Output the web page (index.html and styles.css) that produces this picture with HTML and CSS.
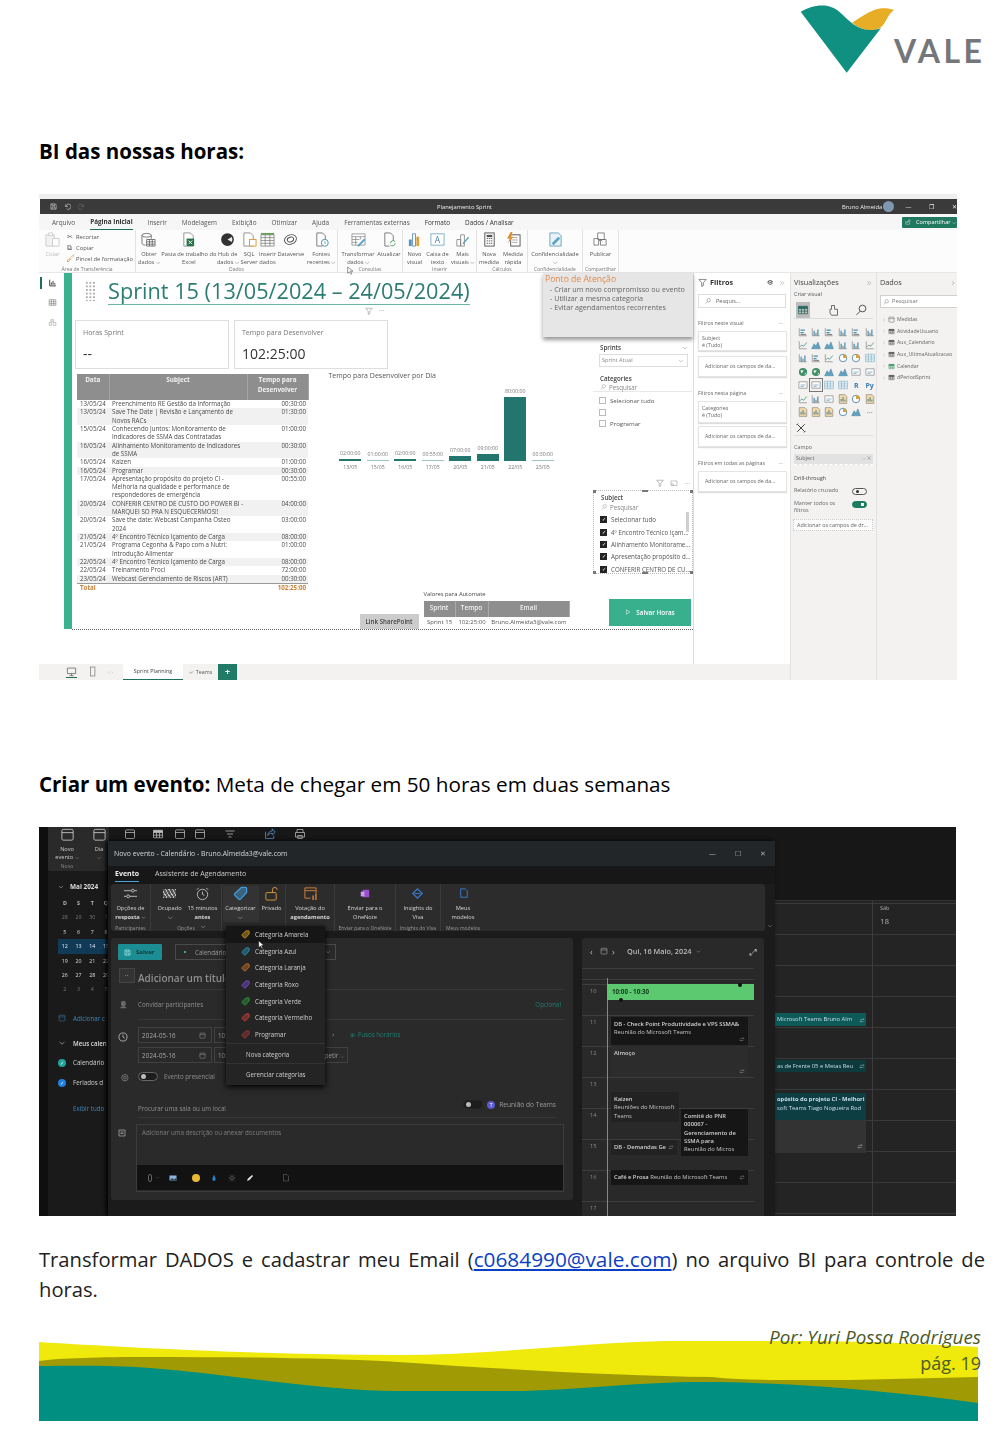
FILE: index.html
```html
<!DOCTYPE html>
<html lang="pt-BR">
<head>
<meta charset="utf-8">
<title>BI das nossas horas</title>
<link rel="stylesheet" href="styles.css">
</head>
<body>
<svg class="defs" xmlns="http://www.w3.org/2000/svg">
  <symbol id="s-db" viewBox="0 0 16 16"><g fill="none" stroke="#555" stroke-width=".8"><ellipse cx="6" cy="3.5" rx="5" ry="2"/><path d="M1 3.500V12c0 1 2 2 4 2M11 3.500V7"/><path d="M6 8h9v7H6zM6 10.500h9M6 13h9M9 8v7M12 8v7" fill="#fff"/></g></symbol>
  <symbol id="s-xl" viewBox="0 0 16 16"><path d="M3 1h7l3 3v11H3z" fill="#fff" stroke="#777" stroke-width=".8"/><rect x="6" y="7" width="8" height="8" fill="#217346"/><path d="M8 9l4 4M12 9l-4 4" stroke="#fff"/></symbol>
  <symbol id="s-hub" viewBox="0 0 16 16"><circle cx="8" cy="8" r="6" fill="#eee" stroke="#333" stroke-width="1.600"/><path d="M2 8a6 6 0 0 1 11-3L8 8l5 3a6 6 0 0 1-11-3z" fill="#333"/></symbol>
  <symbol id="s-doc" viewBox="0 0 16 16"><path d="M2 1h7l3 3v11H2z" fill="#fff" stroke="#777" stroke-width=".8"/><rect x="8" y="8" width="7" height="7" fill="#fff" stroke="#d79b3c"/></symbol>
  <symbol id="s-tbl" viewBox="0 0 16 16"><path d="M1 3h14v12H1zM1 6h14M1 9h14M1 12h14M5.500 3v12M10.500 3v12" fill="#fff" stroke="#666" stroke-width=".7"/><path d="M1 1h14v2H1z" fill="#6c9d5b"/></symbol>
  <symbol id="s-dv" viewBox="0 0 16 16"><g fill="none" stroke="#555"><ellipse cx="8" cy="8" rx="6.500" ry="5" transform="rotate(-20 8 8)"/><ellipse cx="8" cy="8" rx="3.500" ry="2.500" transform="rotate(-20 8 8)"/></g></symbol>
  <symbol id="s-rec" viewBox="0 0 16 16"><path d="M3 1h6l3 3v6" fill="none" stroke="#777"/><path d="M3 1v14h6" fill="none" stroke="#777"/><circle cx="11.500" cy="11.500" r="3.700" fill="#fff" stroke="#4b8fb0"/><path d="M11.500 9.500v2l1.500 1" fill="none" stroke="#4b8fb0" stroke-width=".7"/></symbol>
  <symbol id="s-tr" viewBox="0 0 16 16"><path d="M1 2h14v12H1zM1 5h14M1 8h8M1 11h6M5 5v9M10 5v3" fill="#fff" stroke="#777" stroke-width=".7"/><path d="M7 14l7-7 1.500 1.500-7 7H7z" fill="#58a4c4"/></symbol>
  <symbol id="s-ref" viewBox="0 0 16 16"><path d="M3 1h6l3 3v5M3 1v14h5" fill="none" stroke="#777"/><path d="M9 12a3 3 0 0 1 5-2M14 12a3 3 0 0 1-5 2" fill="none" stroke="#4a9a5a"/></symbol>
  <symbol id="s-bars" viewBox="0 0 16 16"><rect x="2" y="8" width="3" height="7" fill="#5b8fb5"/><rect x="6" y="2" width="3" height="13" fill="#fff" stroke="#3f7fa8" stroke-width=".8"/><rect x="10" y="5" width="3" height="10" fill="#d9a23c"/></symbol>
  <symbol id="s-txt" viewBox="0 0 16 16"><rect x="1" y="2" width="14" height="12" fill="#fff" stroke="#4b8fb0" stroke-width=".7"/><text x="8" y="12" font-size="9" text-anchor="middle" fill="#3f7fa8" font-family="Open Sans">A</text></symbol>
  <symbol id="s-more" viewBox="0 0 16 16"><path d="M2 8h4v7H2zM6 3h4v12H6z" fill="#fff" stroke="#777" stroke-width=".8"/><path d="M8 12l6-7 1 1-6 7z" fill="#58a4c4"/></symbol>
  <symbol id="s-calc" viewBox="0 0 16 16"><rect x="3" y="1" width="10" height="14" fill="#fff" stroke="#555"/><rect x="5" y="3" width="6" height="2.500" fill="#555"/><path d="M5 7h1.500M7.300 7h1.500M9.500 7h1.500M5 9.500h1.500M7.300 9.500h1.500M9.500 9.500h1.500M5 12h1.500M7.300 12h1.500M9.500 12h1.500" stroke="#555"/></symbol>
  <symbol id="s-quick" viewBox="0 0 16 16"><rect x="5" y="3" width="10" height="12" fill="#fff" stroke="#555"/><path d="M7 6h6M7 8.500h6M7 11h6" stroke="#555" stroke-dasharray="1 1"/><path d="M5 0L1 7h3l-2 5 6-7H5l2-5z" fill="#d9902c"/></symbol>
  <symbol id="s-sens" viewBox="0 0 16 16"><path d="M2 1h9l3 3v11H2z" fill="#e8f2f8" stroke="#4b8fb0" stroke-width=".8"/><path d="M4 12l7-7 2 2-7 7z" fill="#58a4c4"/></symbol>
  <symbol id="s-pub" viewBox="0 0 16 16"><path d="M5 1h7v7H5zM1 7h5v7H1zM8 8h6v6H8" fill="#fff" stroke="#666" stroke-width=".8"/><path d="M8 14V8l-2 2M8 8l2 2" fill="none" stroke="#666" stroke-width=".8"/></symbol>
  <symbol id="s-paste" viewBox="0 0 16 16"><path d="M1 3h9v12H1z" fill="#f2f2f2" stroke="#ccc"/><path d="M4 1h4v3H4z" fill="#fff" stroke="#ccc"/><path d="M8 7h7v8H8z" fill="#fff" stroke="#ccc"/></symbol>
  <symbol id="s-filter" viewBox="0 0 16 16"><path d="M1.500 2.500h13L9.500 8.500v5L6.500 15V8.500z" fill="none" stroke="currentColor" stroke-width="1.100"/></symbol>
  <symbol id="s-search" viewBox="0 0 16 16"><circle cx="10" cy="6" r="4.500" fill="none" stroke="currentColor" stroke-width="1.200"/><path d="M7 9.500L2 14.500" stroke="currentColor" stroke-width="1.200"/></symbol>
  <symbol id="s-chev" viewBox="0 0 16 16"><path d="M3 5.500l5 5 5-5" fill="none" stroke="currentColor" stroke-width="1.300"/></symbol>
  <symbol id="s-tri" viewBox="0 0 16 16"><path d="M5 3l6 5-6 5" fill="none" stroke="currentColor" stroke-width="1.200"/></symbol>
  <symbol id="s-dbl" viewBox="0 0 16 16"><path d="M3 3l5 5-5 5M8 3l5 5-5 5" fill="none" stroke="currentColor" stroke-width="1.100"/></symbol>
  <symbol id="s-tg" viewBox="0 0 16 16"><path d="M9 1.500h4.500a1 1 0 0 1 1 1V7L8 14a1.500 1.500 0 0 1-2 0L2 10a1.500 1.500 0 0 1 0-2z" fill="currentColor" fill-opacity=".45" stroke="currentColor" stroke-width="1.400"/></symbol>
  <symbol id="s-v1" viewBox="0 0 16 16"><path d="M2 2v12h12" fill="none" stroke="#777"/><path d="M4 4h7v2H4zM4 8h5v2H4z" fill="#4b8fb0"/><path d="M4 11h9v2H4z" fill="#8a8a8a"/></symbol>
  <symbol id="s-v2" viewBox="0 0 16 16"><path d="M2 2v12h12" fill="none" stroke="#777"/><path d="M4 6h2v8H4zM10 4h2v10h-2z" fill="#4b8fb0"/><path d="M7 9h2v5H7z" fill="#8a8a8a"/></symbol>
  <symbol id="s-v3" viewBox="0 0 16 16"><path d="M2 2v12h12" fill="none" stroke="#777"/><path d="M3 11l3-3 3 2 5-6" fill="none" stroke="#3f8e8a" stroke-width="1.200"/></symbol>
  <symbol id="s-v4" viewBox="0 0 16 16"><path d="M1 14l4-8 3 4 3-7 4 11z" fill="#5fa3c4" stroke="#3b6f88" stroke-width=".7"/></symbol>
  <symbol id="s-v5" viewBox="0 0 16 16"><circle cx="8" cy="8" r="6" fill="#fff" stroke="#3f7fa8" stroke-width="1.300"/><path d="M8 8V2a6 6 0 0 1 6 6z" fill="#d9a23c"/></symbol>
  <symbol id="s-v6" viewBox="0 0 16 16"><circle cx="8" cy="8" r="6.500" fill="#3f8f66"/><path d="M4 5h5l-1 3-3 2zM11 9l2 1-2 3z" fill="#e9e9e9"/></symbol>
  <symbol id="s-v7" viewBox="0 0 16 16"><rect x="1.500" y="3" width="13" height="10" fill="#fff" stroke="#777"/><path d="M4 8h8M4 10.500h5" stroke="#4b8fb0"/></symbol>
  <symbol id="s-v8" viewBox="0 0 16 16"><path d="M1 2h14v12H1zM1 5h14M1 8h14M1 11h14M5.500 2v12M10 2v12" fill="#fff" stroke="#4b8fb0" stroke-width=".7"/></symbol>
  <symbol id="s-v9" viewBox="0 0 16 16"><path d="M2 1h9l3 3v11H2z" fill="#f2d9a8" stroke="#666" stroke-width=".8"/><path d="M5 12V8M8 12V5M11 12V9" stroke="#2f6f8c" stroke-width="1.400"/></symbol>
  <symbol id="s-tbi" viewBox="0 0 16 16"><path d="M2 3h12v10H2zM2 6h12M2 9.500h12M6 6v7M10 6v7" fill="none" stroke="currentColor" stroke-width="1"/><path d="M2 3h12v3H2z" fill="currentColor"/></symbol>
  <symbol id="s-cal" viewBox="0 0 16 16"><rect x="2" y="2.500" width="12" height="11.500" rx="1.500" fill="none" stroke="currentColor"/><path d="M2 6h12" stroke="currentColor"/></symbol>
  <symbol id="s-rpt" viewBox="0 0 16 16"><path d="M3 9a4 4 0 0 1 4-3h6M13 6l-2-2M13 6l-2 2M13 10a4 4 0 0 1-4 2H3M3 12l2-2M3 12l2 2" fill="none" stroke="currentColor" stroke-width="1.100"/></symbol>
</svg>

<header class="doc-head">
  <svg class="logo" viewBox="0 0 227 90" width="227" height="90" role="img" aria-label="Vale">
    <path d="M72 22.700C83 16 90 10 100 8.500c5-.7 10 0 14 1.500C107 15 106 24 100 28c-9 5-20 1-28-5.300z" fill="#e8ad26"/>
    <path d="M20.700 11.700C32 5 48 2 59 11.500 65 17 69 21 73 24c8 6 19 8 28 4L66.700 72.700z" fill="#0f9080"/>
    <text x="114" y="63" class="logo-word" textLength="88">VALE</text>
  </svg>
</header>

<h2 class="doc-h">BI das nossas horas:</h2>

<section class="pbi">
  <div class="pbi-strip"></div>
  <div class="pbi-title">
    <div class="pt-left">
      <svg class="ic7" viewBox="0 0 16 16"><path d="M2 2h10l2 2v10H2zM5 2v4h6V2M5 14V9h6v5" fill="none" stroke="#ddd" stroke-width="1.300"/></svg>
      <svg class="ic7" viewBox="0 0 16 16"><path d="M4 3v5h5M4 8a6 6 0 1 1 2 5" fill="none" stroke="#ddd" stroke-width="1.300"/></svg>
      <svg class="ic7" viewBox="0 0 16 16"><path d="M12 3v5H7M12 8a6 6 0 1 0-2 5" fill="none" stroke="#777" stroke-width="1.300"/></svg>
    </div>
    <span class="pt-name">Planejamento Sprint</span>
    <span class="pt-user">Bruno Almeida</span>
    <span class="pt-avatar"></span>
    <span class="pt-ctl">—</span><span class="pt-ctl">❐</span><span class="pt-ctl">✕</span>
  </div>
  <nav class="pbi-tabs">
    <span>Arquivo</span><span class="on">Página Inicial</span><span>Inserir</span><span>Modelagem</span><span>Exibição</span><span>Otimizar</span><span>Ajuda</span><span>Ferramentas externas</span><span class="ctx">Formato</span><span class="ctx">Dados / Analisar</span>
    <span class="share"><svg class="ic6" viewBox="0 0 16 16"><path d="M2 6v8h10v-4M5 10c0-4 3-6 6-6V1l4 4.500L11 9V7c-3 0-5 1-6 3z" fill="none" stroke="#fff"/></svg>Compartilhar ⌵</span>
  </nav>
  <div class="ribbon">
    <div class="rg rg-clip">
      <div class="rg-items clip">
        <div class="rb pale"><svg class="ic16"><use href="#s-paste"/></svg>Colar</div>
        <ul class="clip-list">
          <li><span class="cl-g">✂</span>Recortar</li>
          <li><span class="cl-g">⧉</span>Copiar</li>
          <li><span class="cl-g orange">🖌</span>Pincel de formatação</li>
        </ul>
      </div>
      <div class="rg-lab">Área de Transferência</div>
    </div>
    <div class="rg rg-dados">
      <div class="rg-items">
        <div class="rb w26"><svg class="ic16"><use href="#s-db"/></svg>Obter<br>dados ⌵</div>
        <div class="rb w54"><svg class="ic16"><use href="#s-xl"/></svg>Pasta de trabalho do<br>Excel</div>
        <div class="rb w24"><svg class="ic16"><use href="#s-hub"/></svg>Hub de<br>dados ⌵</div>
        <div class="rb w19"><svg class="ic16"><use href="#s-doc"/></svg>SQL<br>Server</div>
        <div class="rb w18"><svg class="ic16"><use href="#s-tbl"/></svg>Inserir<br>dados</div>
        <div class="rb w29"><svg class="ic16"><use href="#s-dv"/></svg>Dataverse</div>
        <div class="rb w32"><svg class="ic16"><use href="#s-rec"/></svg>Fontes<br>recentes ⌵</div>
      </div>
      <div class="rg-lab">Dados</div>
    </div>
    <div class="rg rg-cons">
      <div class="rg-items">
        <div class="rb w36"><svg class="ic16"><use href="#s-tr"/></svg>Transformar<br>dados ⌵</div>
        <div class="rb w26"><svg class="ic16"><use href="#s-ref"/></svg>Atualizar</div>
      </div>
      <div class="rg-lab">Consultas</div>
      <svg class="pbi-cursor" viewBox="0 0 10 12"><path d="M1 1v9l2.500-2 2 3.500 1.500-1L5 7h3.500z" fill="#fff" stroke="#444" stroke-width=".8"/></svg>
    </div>
    <div class="rg rg-ins">
      <div class="rg-items">
        <div class="rb w22"><svg class="ic16"><use href="#s-bars"/></svg>Novo<br>visual</div>
        <div class="rb w22"><svg class="ic16"><use href="#s-txt"/></svg>Caixa de<br>texto</div>
        <div class="rb w28"><svg class="ic16"><use href="#s-more"/></svg>Mais<br>visuais ⌵</div>
      </div>
      <div class="rg-lab">Inserir</div>
    </div>
    <div class="rg rg-calc">
      <div class="rg-items">
        <div class="rb w24"><svg class="ic16"><use href="#s-calc"/></svg>Nova<br>medida</div>
        <div class="rb w24"><svg class="ic16"><use href="#s-quick"/></svg>Medida<br>rápida</div>
      </div>
      <div class="rg-lab">Cálculos</div>
    </div>
    <div class="rg rg-conf">
      <div class="rg-items">
        <div class="rb w54"><svg class="ic16"><use href="#s-sens"/></svg>Confidencialidade<br>⌵</div>
      </div>
      <div class="rg-lab">Confidencialidade</div>
    </div>
    <div class="rg rg-pub">
      <div class="rg-items">
        <div class="rb w36"><svg class="ic16"><use href="#s-pub"/></svg>Publicar</div>
      </div>
      <div class="rg-lab">Compartilhar</div>
    </div>
  </div>

  <div class="pbi-body">
    <div class="pbi-work">
      <div class="pbi-row">
        <aside class="rail">
          <svg class="rail-ic" viewBox="0 0 16 16"><path d="M3 3v11h11M6 12V8M9 12V5M12 12V9" fill="none" stroke="#333" stroke-width="1.600"/></svg>
          <svg class="rail-ic" viewBox="0 0 16 16"><path d="M2 3h12v10H2zM2 6.500h12M2 10h12M6 3v10M10 3v10" fill="none" stroke="#777"/></svg>
          <svg class="rail-ic" viewBox="0 0 16 16"><path d="M5 3h5v3H5zM2 8h4v5H2zM9 8h5v5H9z" fill="none" stroke="#999"/></svg>
        </aside>
        <main class="report">
          <div class="report-page">
            <div class="rp-left">
              <div class="rp-title-row">
                <span class="drag-dots"></span>
                <h3 class="sprint-title">Sprint 15 (13/05/2024 – 24/05/2024)</h3>
              </div>
              <div class="title-tools"><svg class="ic8 gr"><use href="#s-filter"/></svg><span>···</span></div>
              <div class="cards">
                <div class="card"><div class="card-lab">Horas Sprint</div><div class="card-val">--</div></div>
                <div class="card"><div class="card-lab">Tempo para Desenvolver</div><div class="card-val">102:25:00</div></div>
              </div>
              <div class="rp-main">
                <table class="hours">
                  <thead><tr><th class="c-d">Data</th><th class="c-s">Subject</th><th class="c-t">Tempo para<br>Desenvolver</th></tr></thead>
                  <tbody>
                    <tr><td>13/05/24</td><td>Preenchimento RE Gestão da Informação</td><td>00:30:00</td></tr>
                    <tr><td>13/05/24</td><td>Save The Date | Revisão e Lançamento de<br>Novos RACs</td><td>01:30:00</td></tr>
                    <tr><td>15/05/24</td><td>Conhecendo Juntos: Monitoramento de<br>Indicadores de SSMA das Contratadas</td><td>01:00:00</td></tr>
                    <tr><td>16/05/24</td><td>Alinhamento Monitoramento de Indicadores<br>de SSMA</td><td>00:30:00</td></tr>
                    <tr><td>16/05/24</td><td>Kaizen</td><td>01:00:00</td></tr>
                    <tr><td>16/05/24</td><td>Programar</td><td>00:30:00</td></tr>
                    <tr><td>17/05/24</td><td>Apresentação propósito do projeto CI -<br>Melhoria na qualidade e performance de<br>respondedores de emergência</td><td>00:55:00</td></tr>
                    <tr><td>20/05/24</td><td>CONFERIR CENTRO DE CUSTO DO POWER BI -<br>MARQUEI SO PRA N ESQUECERMOS!!</td><td>04:00:00</td></tr>
                    <tr><td>20/05/24</td><td>Save the date: Webcast Campanha Osteo<br>2024</td><td>03:00:00</td></tr>
                    <tr><td>21/05/24</td><td>4º Encontro Técnico Içamento de Carga</td><td>08:00:00</td></tr>
                    <tr><td>21/05/24</td><td>Programa Cegonha &amp; Papo com a Nutri:<br>Introdução Alimentar</td><td>01:00:00</td></tr>
                    <tr><td>22/05/24</td><td>4º Encontro Técnico Içamento de Carga</td><td>08:00:00</td></tr>
                    <tr><td>22/05/24</td><td>Treinamento Proci</td><td>72:00:00</td></tr>
                    <tr class="last"><td>23/05/24</td><td>Webcast Gerenciamento de Riscos (ART)</td><td>00:30:00</td></tr>
                    <tr class="total"><td>Total</td><td></td><td>102:25:00</td></tr>
                  </tbody>
                </table>
                <div class="rp-mid">
                  <div class="chart-title">Tempo para Desenvolver por Dia</div>
                  <div class="chart">
                    <div class="col"><span class="cv">02:00:00</span><i class="bar h2"></i><span class="cd">13/05</span></div>
                    <div class="col"><span class="cv">01:00:00</span><i class="bar h1"></i><span class="cd">15/05</span></div>
                    <div class="col"><span class="cv">02:00:00</span><i class="bar h2"></i><span class="cd">16/05</span></div>
                    <div class="col"><span class="cv">00:55:00</span><i class="bar h1"></i><span class="cd">17/05</span></div>
                    <div class="col"><span class="cv">07:00:00</span><i class="bar h5"></i><span class="cd">20/05</span></div>
                    <div class="col"><span class="cv">09:00:00</span><i class="bar h7"></i><span class="cd">21/05</span></div>
                    <div class="col"><span class="cv">80:00:00</span><i class="bar h64"></i><span class="cd">22/05</span></div>
                    <div class="col"><span class="cv">00:30:00</span><i class="bar h1"></i><span class="cd">23/05</span></div>
                  </div>
                  <div class="auto-row">
                    <div class="link-btn">Link SharePoint</div>
                    <div class="auto">
                      <div class="auto-cap">Valores para Automate</div>
                      <div class="auto-grid">
                        <b>Sprint</b><b>Tempo</b><b>Email</b>
                        <span>Sprint 15</span><span>102:25:00</span><span>Bruno.Almeida3@vale.com</span>
                      </div>
                    </div>
                  </div>
                </div>
              </div>
            </div>
            <div class="rp-right">
              <div class="sl-head"><span>Sprints</span><svg class="ic6 gr"><use href="#s-chev"/></svg></div>
              <div class="sl-drop"><span>Sprint Atual</span><svg class="ic6 gr"><use href="#s-chev"/></svg></div>
              <div class="sl-cap cat">Categories</div>
              <div class="sl-search"><svg class="ic6"><use href="#s-search"/></svg>Pesquisar</div>
              <ul class="chk">
                <li><i class="box"></i>Selecionar tudo</li>
                <li><i class="box"></i></li>
                <li><i class="box"></i>Programar</li>
              </ul>
              <div class="sub-tools"><svg class="ic8 gr"><use href="#s-filter"/></svg><svg class="ic7b gr" viewBox="0 0 16 16"><path d="M2 4h12v9H2zM2 10h5v3" fill="none" stroke="currentColor"/></svg><span>···</span></div>
              <div class="subject">
                <i class="hd tl"></i><i class="hd tr"></i><i class="hd bl"></i><i class="hd br"></i><i class="hd tm"></i><i class="hd bm"></i>
                <div class="sl-cap">Subject</div>
                <div class="sl-search flat"><svg class="ic6"><use href="#s-search"/></svg>Pesquisar</div>
                <ul class="chk dark">
                  <li><i class="box on">✓</i>Selecionar tudo</li>
                  <li><i class="box on">✓</i>4º Encontro Técnico Içam...</li>
                  <li><i class="box on">✓</i>Alinhamento Monitorame...</li>
                  <li><i class="box on">✓</i>Apresentação propósito d...</li>
                  <li><i class="box on">✓</i>CONFERIR CENTRO DE CU...</li>
                </ul>
                <i class="sb"></i>
              </div>
              <div class="save-btn"><svg class="ic6" viewBox="0 0 16 16"><path d="M4 2l9 6-9 6z" fill="none" stroke="#fff" stroke-width="1.300"/></svg>Salvar Horas</div>
            </div>
            <aside class="attention">
              <div class="att-title">Ponto de Atenção</div>
              <p>- Criar um novo compromisso ou evento<br>- Utilizar a mesma categoria<br>- Evitar agendamentos recorrentes</p>
            </aside>
          </div>
        </main>
        <aside class="filters">
          <div class="pane-h"><svg class="ic9 dk"><use href="#s-filter"/></svg><b>Filtros</b><span class="fl-eye">👁</span><svg class="ic6 gr"><use href="#s-dbl"/></svg></div>
          <div class="fl-search"><svg class="ic6"><use href="#s-search"/></svg>Pesquis...</div>
          <div class="fl-sec first"><span>Filtros neste visual</span><span>···</span></div>
          <div class="fl-card"><b>Subject</b><span>é (Tudo)</span></div>
          <div class="fl-card add">Adicionar os campos de da...</div>
          <div class="fl-sec"><span>Filtros nesta página</span><span>···</span></div>
          <div class="fl-card tall"><b>Categories</b><span>é (Tudo)</span></div>
          <div class="fl-card add">Adicionar os campos de da...</div>
          <div class="fl-sec"><span>Filtros em todas as páginas</span><span>···</span></div>
          <div class="fl-card add">Adicionar os campos de da...</div>
        </aside>
      </div>
      <footer class="pbi-foot">
        <svg class="foot-ic mon" viewBox="0 0 16 16"><path d="M2 3h12v8H2zM5 14h6M8 11v3" fill="none" stroke="#555"/></svg>
        <svg class="foot-ic" viewBox="0 0 16 16"><rect x="5" y="1.500" width="6.500" height="13" fill="none" stroke="#777"/></svg>
        <span class="ft-arr">‹ ›</span>
        <span class="ft-tab">Sprint Planning</span>
        <span class="ft-tab2"><svg class="ic5" viewBox="0 0 16 16"><path d="M2 12c3-8 4-8 6-2 2-4 3-4 6-6" fill="none" stroke="#777" stroke-width="1.500"/></svg>Teams</span>
        <span class="ft-add">+</span>
      </footer>
    </div>
    <aside class="viz">
      <div class="pane-h between"><b class="reg">Visualizações</b><svg class="ic6 gr"><use href="#s-dbl"/></svg></div>
      <div class="viz-sub">Criar visual</div>
      <div class="viz-top">
        <span class="vt-sel"><svg class="ic12"><use href="#s-tbi"/></svg></span>
        <svg class="ic12 dk" viewBox="0 0 16 16"><path d="M6 2h4v5h4v8H6l-2-3V7h2z" fill="none" stroke="currentColor"/></svg>
        <svg class="ic12 dk"><use href="#s-search"/></svg>
      </div>
      <div class="viz-grid">
        <svg><use href="#s-v1"/></svg><svg><use href="#s-v2"/></svg><svg><use href="#s-v1"/></svg><svg><use href="#s-v2"/></svg><svg><use href="#s-v1"/></svg><svg><use href="#s-v2"/></svg>
        <svg><use href="#s-v3"/></svg><svg><use href="#s-v4"/></svg><svg><use href="#s-v4"/></svg><svg><use href="#s-v2"/></svg><svg><use href="#s-v2"/></svg><svg><use href="#s-v3"/></svg>
        <svg><use href="#s-v2"/></svg><svg><use href="#s-v1"/></svg><svg><use href="#s-v3"/></svg><svg><use href="#s-v5"/></svg><svg><use href="#s-v5"/></svg><svg><use href="#s-v8"/></svg>
        <svg><use href="#s-v6"/></svg><svg><use href="#s-v6"/></svg><svg><use href="#s-v4"/></svg><svg><use href="#s-v4"/></svg><svg><use href="#s-v7"/></svg><svg><use href="#s-v7"/></svg>
        <svg><use href="#s-v7"/></svg><svg class="vg-sel"><use href="#s-v7"/></svg><svg><use href="#s-v8"/></svg><svg><use href="#s-v8"/></svg><em class="r">R</em><em class="py">Py</em>
        <svg><use href="#s-v3"/></svg><svg><use href="#s-v2"/></svg><svg><use href="#s-v7"/></svg><svg><use href="#s-v9"/></svg><svg><use href="#s-v5"/></svg><svg><use href="#s-v9"/></svg>
        <svg><use href="#s-v9"/></svg><svg><use href="#s-v9"/></svg><svg><use href="#s-v9"/></svg><svg><use href="#s-v5"/></svg><svg><use href="#s-v4"/></svg><em class="dots">···</em>
      </div>
      <div class="viz-tool"><svg class="ic10 dk" viewBox="0 0 16 16"><path d="M2 2l12 12M14 2L2 14M3 1L1 3M13 15l2-2" fill="none" stroke="currentColor" stroke-width="1.600"/></svg></div>
      <div class="viz-cap">Campo</div>
      <div class="viz-field"><span>Subject</span><span class="x">⌵ ✕</span></div>
      <div class="viz-cap b">Drill-through</div>
      <div class="viz-opt"><span>Relatório cruzado</span><i class="tog off"></i></div>
      <div class="viz-opt two"><span>Manter todos os filtros</span><i class="tog yes"></i></div>
      <div class="viz-add">Adicionar os campos de dr...</div>
    </aside>
    <aside class="data">
      <div class="pane-h between"><b class="reg">Dados</b><svg class="ic6 gr"><use href="#s-tri"/></svg></div>
      <div class="data-search"><svg class="ic6"><use href="#s-search"/></svg>Pesquisar</div>
      <ul class="tree">
        <li><svg class="ic4 gr"><use href="#s-tri"/></svg><svg class="ic7 dk"><use href="#s-cal"/></svg>Medidas</li>
        <li><svg class="ic4 gr"><use href="#s-tri"/></svg><svg class="ic7 dk"><use href="#s-tbi"/></svg>AtividadeUsuario</li>
        <li><svg class="ic4 gr"><use href="#s-tri"/></svg><svg class="ic7 dk"><use href="#s-tbi"/></svg>Aux_Calendario</li>
        <li><svg class="ic4 gr"><use href="#s-tri"/></svg><svg class="ic7 dk"><use href="#s-tbi"/></svg>Aux_UltimaAtualizacao</li>
        <li><svg class="ic4 gr"><use href="#s-tri"/></svg><svg class="ic7 tealic"><use href="#s-tbi"/></svg>Calendar</li>
        <li><svg class="ic4 gr"><use href="#s-tri"/></svg><svg class="ic7 dk"><use href="#s-tbi"/></svg>dPeriodSprint</li>
      </ul>
    </aside>
  </div>
</section>

<h2 class="doc-h second">Criar um evento: <span class="reg-t">Meta de chegar em 50 horas em duas semanas</span></h2>

<section class="ol">
  <div class="ol-bg">
    <aside class="ol-rail"></aside>
    <div class="ol-left">
      <div class="ol-ribbon">
        <div class="olr-btn"><svg class="ic16 lt"><use href="#s-cal"/></svg><span>Novo<br>evento ⌵</span><small>Novo</small></div>
        <div class="olr-btn"><svg class="ic16 lt"><use href="#s-cal"/></svg><span>Dia<br>⌵</span></div>
      </div>
      <div class="ol-month"><svg class="ic6"><use href="#s-chev"/></svg><b>Mai 2024</b></div>
      <div class="ol-days">
        <b>D</b><b>S</b><b>T</b><b>Q</b>
        <i>28</i><i>29</i><i>30</i><i>1</i>
        <span>5</span><span>6</span><span>7</span><span>8</span>
        <span class="wk">12</span><span class="wk">13</span><span class="wk">14</span><span class="wk">15</span>
        <span>19</span><span>20</span><span>21</span><span>22</span>
        <span>26</span><span>27</span><span>28</span><span>29</span>
        <i>2</i><i>3</i><i>4</i><i>5</i>
      </div>
      <div class="ol-add"><svg class="ic8"><use href="#s-cal"/></svg><span>Adicionar c</span></div>
      <div class="ol-my"><svg class="ic8 lt"><use href="#s-chev"/></svg><b>Meus calen</b></div>
      <div class="ol-c"><i class="dot teal">✓</i>Calendário</div>
      <div class="ol-c"><i class="dot blue">✓</i>Feriados d</div>
      <div class="ol-all">Exibir tudo</div>
    </div>
    <div class="ol-main">
      <div class="ol-tools">
        <svg class="ic12 lt t1"><use href="#s-cal"/></svg><svg class="ic12 lt t2"><use href="#s-tbi"/></svg><svg class="ic12 lt t3"><use href="#s-cal"/></svg><svg class="ic12 lt t4"><use href="#s-cal"/></svg>
        <svg class="ic12 lt t5" viewBox="0 0 16 16"><path d="M2 4h12M4 8h8M6 12h4" stroke="currentColor"/></svg>
        <svg class="ic12 t6" viewBox="0 0 16 16"><path d="M2 5v9h11v-4M5 10c0-4 3-6 6-6V1l4 4.500L11 9V7c-3 0-5 1-6 3z" fill="none" stroke="#5a9ad8"/></svg>
        <svg class="ic12 lt t7" viewBox="0 0 16 16"><path d="M4 6V2h8v4M2 6h12v6H2zM5 10h6v4H5z" fill="none" stroke="currentColor"/></svg>
      </div>
      <div class="ol-week">
        <div class="ol-weekhead"><span>Sáb</span><b>18</b></div>
        <div class="ol-evt e1"><span>Microsoft Teams Bruno Alm</span><svg class="ic6"><use href="#s-rpt"/></svg></div>
        <div class="ol-evt e2"><span>as de Frente 05 e Metas Reu</span><svg class="ic6"><use href="#s-rpt"/></svg></div>
        <div class="ol-evt e3"><b>opósito do projeto CI - Melhori</b><span>soft Teams Tiago Nogueira Rod</span></div>
        <div class="ol-evt e4"><svg class="ic6"><use href="#s-rpt"/></svg></div>
      </div>
    </div>
  </div>

  <div class="ev">
    <div class="ev-title">
      <span>Novo evento - Calendário - Bruno.Almeida3@vale.com</span>
      <span class="ev-ctl">—</span><span class="ev-ctl">☐</span><span class="ev-ctl">✕</span>
    </div>
    <div class="ev-tabs"><span class="on">Evento</span><span>Assistente de Agendamento</span></div>
    <div class="ev-ribbon">
      <div class="er-g w-a"><div class="er-i"><div class="erb"><svg class="ic16 lt" viewBox="0 0 16 16"><path d="M1 5h8M12 5h3M1 11h3M7 11h8" stroke="currentColor"/><circle cx="10.500" cy="5" r="1.500" fill="none" stroke="currentColor"/><circle cx="5.500" cy="11" r="1.500" fill="none" stroke="currentColor"/></svg>Opções de<span class="er-line"><b>resposta</b><svg class="ic5"><use href="#s-chev"/></svg></span></div></div><small>Participantes</small></div>
      <div class="er-g w-b"><div class="er-i"><div class="erb w27"><span class="busy"></span>Ocupado<br>⌵</div><div class="erb w27"><svg class="ic16 lt" viewBox="0 0 16 16"><circle cx="8" cy="9" r="5.500" fill="none" stroke="currentColor"/><path d="M8 6v3l2 1M2 4l2-2M14 4l-2-2" fill="none" stroke="currentColor"/></svg>15 minutos<br><b>antes</b> ⌵</div></div><small>Opções</small></div>
      <div class="er-g w-c"><div class="er-i"><div class="erb w36 hl"><svg class="ic16 tagb"><use href="#s-tg"/></svg>Categorizar<br>⌵</div><div class="erb w26"><svg class="ic16 gold" viewBox="0 0 16 16"><rect x="2" y="7" width="11" height="8" rx="1" fill="none" stroke="currentColor"/><path d="M9 7V4a2.500 2.500 0 0 1 5 0" fill="none" stroke="currentColor"/></svg>Privado</div></div></div>
      <div class="er-g w-d"><div class="er-i"><div class="erb"><svg class="ic16 orange2" viewBox="0 0 16 16"><path d="M2 2h12v6M2 2v11h6M2 5h12" fill="none" stroke="currentColor"/><path d="M10 10h1.500v5H10zM13 8h1.500v7H13z" fill="currentColor"/></svg>Votação do<br><b>agendamento</b></div></div></div>
      <div class="er-g w-e"><div class="er-i"><div class="erb"><svg class="ic16 purple" viewBox="0 0 16 16"><path d="M6 4h7v8H6z" fill="currentColor"/><path d="M4 6h4v5H4z" fill="#c99be8"/></svg>Enviar para o<br>OneNote</div></div><small>Enviar para o OneNote</small></div>
      <div class="er-g w-f"><div class="er-i"><div class="erb"><svg class="ic16 blue2" viewBox="0 0 16 16"><path d="M8 3l5 5-5 5-5-5z" fill="none" stroke="currentColor" stroke-width="1.300"/><path d="M5 8h6" stroke="currentColor"/></svg>Insights do<br>Viva</div></div><small>Insights do Viva</small></div>
      <div class="er-g w-g"><div class="er-i"><div class="erb"><svg class="ic16 blue2" viewBox="0 0 16 16"><path d="M5 3h5l2 2v7H5z" fill="none" stroke="currentColor"/></svg>Meus<br>modelos</div></div><small>Meus modelos</small></div>
      <svg class="ic6 er-more"><use href="#s-chev"/></svg>
    </div>
    <div class="ev-body">
      <div class="form">
        <div class="f-top">
          <span class="f-save"><svg class="ic7" viewBox="0 0 16 16"><path d="M2 2h10l2 2v10H2zM5 2v4h6V2M5 14V9h6v5" fill="none" stroke="#bff" stroke-width="1.200"/></svg>Salvar</span>
          <span class="f-cal"><i></i>Calendário<svg class="ic6 f-chev"><use href="#s-chev"/></svg></span>
        </div>
        <div class="f-row f-tit"><span class="f-ic box"><span class="f-ic-in">▪▪</span></span><span>Adicionar um título</span></div>
        <div class="f-row f-inv"><span class="f-ic">👤</span><span>Convidar participantes</span><em>Opcional</em></div>
        <div class="f-dates">
          <span class="f-ic clock"><svg class="ic10 lt" viewBox="0 0 16 16"><circle cx="8" cy="8" r="6.500" fill="none" stroke="currentColor" stroke-width="1.300"/><path d="M8 4v4l3 2" fill="none" stroke="currentColor" stroke-width="1.300"/></svg></span>
          <div class="f-dcol">
            <div class="f-d"><span class="dbox">2024-05-16<svg class="ic7"><use href="#s-cal"/></svg></span><span class="tbox">10:00</span><span class="after sp">›</span><span class="tz"><i>⊕</i>Fusos horários</span></div>
            <div class="f-d"><span class="dbox">2024-05-16<svg class="ic7"><use href="#s-cal"/></svg></span><span class="tbox">10:30</span><span class="after">Repetir ⌵</span></div>
          </div>
        </div>
        <div class="f-tog"><span class="f-ic">◎</span><i class="tg-d"></i><span>Evento presencial</span></div>
        <div class="f-loc"><span>Procurar uma sala ou um local</span><span class="teams"><i class="tg-d sm"></i><i class="t-ic">T</i>Reunião do Teams</span></div>
        <div class="f-desc">
          <span class="f-ic doc"><svg class="ic8 lt" viewBox="0 0 16 16"><path d="M2 2h12v12H2zM5 6h6M5 9h6" fill="none" stroke="currentColor" stroke-width="1.300"/></svg></span>
          <div class="desc-box">
            <div class="desc-txt">Adicionar uma descrição ou anexar documentos</div>
            <div class="desc-tools">
              <svg class="ic8 dt1" viewBox="0 0 16 16"><rect x="5" y="1" width="6" height="14" rx="3" fill="none" stroke="#888" stroke-width="1.400"/></svg>
              <svg class="ic5 dt1b"><use href="#s-chev"/></svg>
              <svg class="ic8 dt2" viewBox="0 0 16 16"><rect x="1" y="3" width="14" height="10" fill="#8fb4dc"/><path d="M1 13l5-5 4 3 5-4v6z" fill="#33465a"/></svg>
              <i class="smile"></i>
              <svg class="ic8 dt3" viewBox="0 0 16 16"><path d="M8 1l3 7c1 4-1 6-3 6s-4-2-3-6z" fill="#2c7fc4"/></svg>
              <svg class="ic8 dt3" viewBox="0 0 16 16"><circle cx="8" cy="8" r="3" fill="none" stroke="#7a7a7a"/><path d="M8 1v3M8 12v3M1 8h3M12 8h3M3 3l2 2M11 11l2 2M3 13l2-2M11 5l2-2" stroke="#7a7a7a"/></svg>
              <svg class="ic8 dt3" viewBox="0 0 16 16"><path d="M2 14l2-5 8-7 2 2-7 8z" fill="#e4e4e4"/></svg>
              <svg class="ic8 dt4" viewBox="0 0 16 16"><path d="M3 1h7l3 3v10H3z" fill="none" stroke="#777"/></svg>
            </div>
          </div>
        </div>
      </div>
      <div class="sched">
        <div class="sc-head"><span class="sc-nav">‹</span><svg class="ic8 lt"><use href="#s-cal"/></svg><span class="sc-nav">›</span><b>Qui, 16 Maio, 2024</b><svg class="ic5"><use href="#s-chev"/></svg><span class="sc-exp">⤢</span></div>
        <div class="sc-strip"></div>
        <div class="sc-grid">
          <div class="sc-hr">10</div><div class="sc-hr">11</div><div class="sc-hr">12</div><div class="sc-hr">13</div><div class="sc-hr">14</div><div class="sc-hr">15</div><div class="sc-hr">16</div><div class="sc-hr">17</div>
          <div class="sc-ev now">10:00 - 10:30<i class="n1"></i><i class="n2"></i></div>
          <div class="sc-ev a"><b>DB - Check Point Produtividade e VPS SSMA&amp;</b><br>Reunião do Microsoft Teams<svg class="ic6 rp"><use href="#s-rpt"/></svg></div>
          <div class="sc-ev b"><b>Almoço</b><svg class="ic6 rp"><use href="#s-rpt"/></svg></div>
          <div class="sc-ev c"><b>Kaizen</b><br>Reuniões do Microsoft Teams</div>
          <div class="sc-ev d"><b>Comitê do PNR 000067 - Gerenciamento de SSMA para</b><br>Reunião do Micros</div>
          <div class="sc-ev e"><b>DB - Demandas Ge</b><svg class="ic6 rp2"><use href="#s-rpt"/></svg></div>
          <div class="sc-ev f"><b>Café e Prosa</b> Reunião do Microsoft Teams<svg class="ic6 rp2"><use href="#s-rpt"/></svg></div>
        </div>
      </div>
    </div>
    <div class="cat-menu">
      <ul>
        <li class="hov"><svg class="ic9 c-am"><use href="#s-tg"/></svg>Categoria Amarela</li>
        <li><svg class="ic9 c-az"><use href="#s-tg"/></svg>Categoria Azul</li>
        <li><svg class="ic9 c-la"><use href="#s-tg"/></svg>Categoria Laranja</li>
        <li><svg class="ic9 c-ro"><use href="#s-tg"/></svg>Categoria Roxo</li>
        <li><svg class="ic9 c-ve"><use href="#s-tg"/></svg>Categoria Verde</li>
        <li><svg class="ic9 c-vm"><use href="#s-tg"/></svg>Categoria Vermelho</li>
        <li><svg class="ic9 c-pr"><use href="#s-tg"/></svg>Programar</li>
      </ul>
      <div class="cm-link">Nova categoria</div>
      <div class="cm-link">Gerenciar categorias</div>
      <svg class="ol-cursor" viewBox="0 0 10 14"><path d="M1 1v10l2.500-2.500 2 4 1.500-1-2-3.700H8.500z" fill="#fff" stroke="#000" stroke-width=".7"/></svg>
    </div>
  </div>
</section>

<p class="doc-p">Transformar DADOS e cadastrar meu Email (<a href="mailto:c0684990@vale.com">c0684990@vale.com</a>) no arquivo BI para controle de horas.</p>

<footer class="doc-foot">
  <svg class="waves" viewBox="39 1325 939 96" width="939" height="96" preserveAspectRatio="none" aria-hidden="true">
    <path d="M39 1342C120 1347 260 1355 398 1355 490 1355 590 1342 668 1341L800 1341C880 1341 940 1345 978 1347V1421H39z" fill="#efe90c"/>
    <path d="M39 1361C60 1358 100 1357 150 1357 240 1357 330 1358 398 1362 500 1369 620 1376 712 1377 750 1381 790 1380 850 1380L978 1377V1421H39z" fill="#a09b05"/>
    <path d="M39 1366C70 1366 110 1365 150 1368 230 1374 320 1391 398 1391L523 1391C590 1389 640 1382 700 1382 790 1382 890 1391 978 1403V1421H39z" fill="#008f80"/>
  </svg>
  <div class="foot-text"><em>Por: Yuri Possa Rodrigues</em><span>pág. 19</span></div>
</footer>
</body>
</html>
```
FILE: styles.css
```css
*{box-sizing:border-box}
html,body{margin:0;padding:0}
body{width:1007px;height:1437px;overflow:hidden;background:#fff;font-family:"Open Sans",sans-serif;color:#111}
ul{list-style:none;margin:0;padding:0}
p{margin:0}
svg{display:block;flex:none}
.defs{display:none}

/* document */
.doc-head{height:131px;display:flex;justify-content:flex-end;align-items:flex-start}
.logo-word{font-family:Lato,sans-serif;font-weight:700;font-size:32px;fill:#75767a}
.doc-h{margin:0 0 23px 39px;font-size:20.5px;line-height:40px;font-weight:700;color:#000}
.doc-h.second{margin-top:84px}
.reg-t{font-weight:400;font-size:20.7px}
.doc-p{margin:29px 22px 0 39px;font-size:20.2px;line-height:29.5px;text-align:justify;color:#222}
.doc-p a{color:#0b3fc4;font-size:20.8px}
.doc-foot{position:relative;margin:21px 0 0 39px;width:942px;height:96px}
.foot-text{position:absolute;top:-1px;right:0;display:flex;flex-direction:column;align-items:flex-end;font-size:18px;line-height:26px;color:#4b5a28}
.foot-text em{font-style:italic;font-size:18.9px}

/* small icons */
.ic4{width:4px;height:4px}.ic5{width:5px;height:5px}.ic6{width:6px;height:6px}.ic7{width:7px;height:7px}.ic8{width:8px;height:8px}.ic9{width:9px;height:9px}.ic10{width:10px;height:10px}.ic12{width:12px;height:12px}.ic14{width:14px;height:14px}.ic16{width:15px;height:15px}
.ic7b{width:8px;height:8px}
.gr{color:#8a8a8a}.dk{color:#444}.lt{color:#bdbdbd}.tealic{color:#2a8a5a}

/* power bi */
.pbi{width:918px;height:486px;margin-left:39px;background:#fff;display:flex;flex-direction:column;overflow:hidden;filter:blur(.45px);color:#555}
.pbi-strip{height:5px;background:#efefef}
.pbi-title{height:15px;margin-left:1px;background:#3a3a3a;display:flex;align-items:center;color:#eee;font-size:5.8px;padding-left:10px;overflow:hidden}
.pbi-title>*{flex:none}
.pt-left{display:flex;gap:7px;width:387px}
.pt-name{width:405px}
.pt-user{width:41px}
.pt-avatar{width:11px;height:11px;border-radius:50%;background:#7f98b0;margin-right:3px}
.pt-ctl{width:23px;text-align:center;font-size:6px}
.pbi-tabs{height:16px;background:#f6f6f6;display:flex;align-items:center;gap:15px;padding-left:13px;font-size:6.4px;white-space:nowrap}
.pbi-tabs .on{font-weight:700;color:#333;height:16px;line-height:16px;border-bottom:1px solid #1d6f5b}
.pbi-tabs .ctx{color:#333}
.share{margin-left:auto;background:#20785f;color:#fff;height:11px;line-height:11px;width:55px;padding-left:3px;font-size:5.6px;border-radius:1px;display:flex;align-items:center;gap:5px}
.ribbon{height:43px;background:#fcfcfc;display:flex;border-bottom:1px solid #e6e6e6;font-size:5.7px;line-height:8.4px}
.rg{display:flex;flex-direction:column;border-right:1px solid #e2e2e2;position:relative}
.rg-clip{width:97px}.rg-dados{width:202px}.rg-cons{width:65px}.rg-ins{width:74px}.rg-calc{width:51px}.rg-conf{width:55px}.rg-pub{width:36px}
.rg-items{height:36px;display:flex;padding-top:2px}
.rg-lab{font-size:5px;line-height:6px;text-align:center;color:#777}
.rb{display:flex;flex-direction:column;align-items:center;text-align:center;white-space:nowrap;color:#555}
.rb svg{margin-bottom:3px}
.pale{color:#bbb;width:27px}
.w18{width:18px}.w19{width:19px}.w22{width:24px}.w24{width:24px}.w26{width:26px}.w27{width:27px}.w28{width:28px}.w29{width:29px}.w32{width:32px}.w36{width:36px}.w52{width:52px}.w54{width:54px}
.rg-cons .rb,.rg-ins .rb{justify-content:flex-start}
.rg-cons .rg-items{padding-left:2px}
.clip-list li{display:flex;align-items:center;gap:3px;height:11px;white-space:nowrap;font-size:5.8px}
.cl-g{width:7px;font-size:7px;color:#555;text-align:center}
.orange{color:#c9902c}
.pbi-cursor{position:absolute;left:9px;top:36px;width:7px;height:9px}

.pbi-body{flex:1;display:flex;min-height:0}
.pbi-work{width:751px;display:flex;flex-direction:column}
.pbi-row{flex:1;display:flex;min-height:0}
.rail{width:25px;padding:5px 0 0 1px;display:flex;flex-direction:column;gap:11px;align-items:center;background:#fff linear-gradient(#1d6f5b,#1d6f5b) 1px 4px/2px 12px no-repeat}
.rail-ic{width:9px;height:9px}
.report{width:630px;background:#fff;display:flex;border-right:1px solid #dcdcdc}
.report::before{content:"";width:8px;height:356px;background:#3bb28f;flex:none}
.report-page{flex:1;display:flex;position:relative;height:357px;border-bottom:1px dotted #666}
.rp-left{width:521px;display:flex;flex-direction:column}
.rp-title-row{display:flex;align-items:center;gap:12px;padding:4px 0 0 13px;height:31px}
.drag-dots{width:11px;height:20px;background-image:radial-gradient(#aaa .8px,transparent 1px);background-size:3.6px 3.6px}
.sprint-title{margin:0;font-size:21.7px;line-height:27px;font-weight:400;color:#2b7d73;border-bottom:1px solid #6ab5a6;white-space:nowrap}
.title-tools{display:flex;gap:6px;align-items:center;height:8px;margin:3px 0 5px 293px;font-size:7px;color:#999;line-height:8px}
.cards{display:flex;gap:5px;padding-left:3px}
.card{border:1px solid #dedede;height:49px;width:154px;padding:6px 6px 0 7px}
.card-lab{font-size:7px;line-height:12px;color:#777}
.card-val{font-size:14px;line-height:20px;color:#333;margin-top:5px}
.rp-main{display:flex;margin-top:5px;padding-left:5px}
.hours{width:231px;border-collapse:collapse;table-layout:fixed;font-size:6.2px;line-height:8.32px;color:#4a4a4a;align-self:flex-start}
.hours th{background:#8e8e8e;color:#f2f2f2;font-weight:700;padding:1px 3px;font-size:6.4px;line-height:10px;height:26px;vertical-align:top;border-right:1px solid #a4a4a4}
.c-d{width:32px}.c-s{width:138px}.c-t{width:61px}
.hours td{padding:0 2px 0 3px;vertical-align:top;white-space:nowrap}
.hours td:last-child{text-align:right}
.hours tbody tr:nth-child(even){background:#f1f1f1}
.hours .last{border-bottom:1px solid #999}
.hours .total{color:#c9803c;font-weight:700;background:#fff}
.rp-mid{margin-left:20px;width:241px;display:flex;flex-direction:column;margin-top:-3px}
.chart-title{font-size:7px;line-height:10px;color:#555;white-space:nowrap}
.chart{display:flex;height:90px;align-items:flex-end;padding-left:8px}
.col{width:27.5px;display:flex;flex-direction:column;align-items:center;justify-content:flex-end;height:90px}
.cv{font-size:5.2px;line-height:7px;white-space:nowrap;color:#777;margin-bottom:2px}
.cd{font-size:5.2px;line-height:7px;color:#777;margin-top:3px}
.bar{display:block;width:22px;background:#23766d}
.h1{height:1px;background:#9cc7c1}.h2{height:2px}.h5{height:5px}.h7{height:7px}.h64{height:64px}
.auto-row{display:flex;align-items:flex-end;gap:5px;margin-top:119px;padding-left:31px}
.link-btn{width:59px;height:15px;line-height:15px;background:#ccc;font-size:6.2px;font-weight:600;text-align:center;color:#444;white-space:nowrap}
.auto{margin-bottom:2px}
.auto-cap{font-size:5.8px;line-height:9px;color:#444;white-space:nowrap;margin-bottom:2px}
.auto-grid{display:grid;grid-template-columns:32px 33px 81px;grid-template-rows:16px 10px;font-size:6px;line-height:10px;text-align:center;white-space:nowrap}
.auto-grid b{background:#8e8e8e;color:#f2f2f2;font-weight:600;font-size:6.4px;line-height:13px;border-right:1px solid #aaa}

.rp-right{width:100px;display:flex;flex-direction:column;padding-top:69px;font-size:6.2px;line-height:9px}
.sl-head{display:flex;justify-content:space-between;align-items:center;padding:0 5px 0 7px;font-weight:600;color:#444;height:11px}
.sl-drop{margin:1px 5px 0 6px;height:13px;border:1px solid #ddd;display:flex;justify-content:space-between;align-items:center;padding:0 3px 0 2px;color:#888;font-size:5.6px}
.sl-cap{padding-left:7px;font-weight:600;color:#444;line-height:9px}
.sl-cap.cat{margin-top:7px}
.sl-search{display:flex;align-items:center;gap:3px;padding-left:7px;height:9px;margin-bottom:3px;color:#888;border-bottom:1px solid #e8e8e8;margin-right:1px}
.sl-search.flat{border-bottom:0;margin:1px 0 2px}
.chk{padding-left:6px;color:#555}
.chk li{display:flex;align-items:center;gap:4px;height:11.500px;white-space:nowrap;font-size:6.100px}
.chk.dark li{height:12.400px;font-size:6.200px;gap:4px}
.box{display:block;width:7px;height:7px;border:1px solid #bbb;flex:none;font-style:normal}
.box.on{background:#222;border-color:#222;color:#fff;font-size:5px;line-height:5px;text-align:center}
.sub-tools{display:flex;justify-content:flex-end;gap:6px;padding-right:3px;height:9px;margin-top:49px;align-items:center;font-size:7px;color:#999}
.subject{position:relative;margin-top:2px;height:84px;border:1px dotted #bbb;padding-top:2px;overflow:visible}
.hd{position:absolute;width:3px;height:3px;background:#777}
.tl{left:-1px;top:-1px}.tr{right:-1px;top:-1px}.bl{left:-1px;bottom:-1px}.br{right:-1px;bottom:-1px}
.tm{left:48px;top:-1px;width:6px;height:2px}.bm{left:48px;bottom:-1px;width:6px;height:2px}
.sb{position:absolute;right:3px;top:21px;width:3px;height:20px;background:#cfcfcf}
.save-btn{margin:25px 2px 0 16px;height:27px;background:#38b08d;color:#fff;display:flex;align-items:center;justify-content:center;gap:5px;font-size:6.300px;font-weight:600}
.attention{position:absolute;top:0;right:0;width:150px;height:64px;background:#e6e6e6;box-shadow:0 3px 4px #999;padding:0 4px 0 2px;color:#666;font-size:7.200px;line-height:9px}
.att-title{color:#e08a4a;font-size:8.600px;line-height:12px}
.attention p{padding-left:5px}

.filters{width:96px;background:#fff;padding:0 3px 0 4px;font-size:5.300px;line-height:7px}
.pane-h{height:19px;display:flex;align-items:center;gap:3px;font-size:7.300px;color:#333;padding-right:2px}
.pane-h b{font-weight:700;flex:1}
.pane-h .reg{font-weight:400;color:#444}
.fl-eye{font-size:5px;margin-right:3px}
.fl-search{height:14px;margin:2px 1px 3px 0;border:1px solid #ddd;display:flex;align-items:center;gap:5px;padding-left:6px;color:#666;font-size:5.500px}
.fl-sec{display:flex;justify-content:space-between;color:#666;padding-right:4px;height:7px;margin:13px 0 4px}
.fl-sec.first{margin-top:12px}
.fl-card{display:flex;flex-direction:column;border:1px solid #e4e4e4;box-shadow:0 1px 1px #ddd;padding:3px 3px;margin-bottom:5px;height:20px;color:#666}
.fl-card.tall{height:22px;margin-bottom:3px}
.fl-card b{font-weight:400}
.fl-card.add{justify-content:center;padding-left:6px;height:21px;white-space:nowrap}

.viz{width:86px;background:#f3f2f1;border-left:1px solid #e2e2e2;padding:0 3px;font-size:5.400px;line-height:7px}
.between{justify-content:space-between;padding-right:1px}
.viz-sub{margin-top:-1px;height:7px;color:#555}
.viz-top{display:flex;align-items:center;justify-content:space-between;height:18px;padding:0 6px 0 2px;border-bottom:1px solid #ddd;margin-top:3px}
.vt-sel{background:#bdbdbd;padding:1px 1px;color:#27685e;height:16px;display:flex;align-items:center}
.viz-grid{display:grid;grid-template-columns:repeat(6,13.400px);grid-auto-rows:13.400px;margin-top:6px;padding-left:2px;align-items:center;justify-items:center}
.viz-grid svg{width:10px;height:10px}
.viz-grid .vg-sel{outline:1px solid #777;outline-offset:1px}
.viz-grid em{font-style:normal;font-weight:700;font-size:7px}
.r{color:#3f7fb5}.py{color:#3f7fb5}.dots{color:#999}
.viz-tool{height:15px;margin-top:2px;padding:2px 0 0 2px;border-bottom:1px solid #e0e0e0}
.viz-cap{margin-top:8px;color:#666;height:7px}
.viz-cap.b{margin-top:10px;color:#444}
.viz-field{height:11px;margin-top:3px;background:#e2e2e2;display:flex;justify-content:space-between;align-items:center;padding:0 2px;border-bottom:1px dashed #fff;color:#666}
.viz-field .x{color:#999}
.viz-opt{display:flex;justify-content:space-between;align-items:flex-start;padding-right:6px;height:13px;margin-top:5px;color:#666}
.viz-opt.two{height:16px;margin-top:0}
.viz-opt.two span{width:50px}
.tog{display:block;width:15px;height:7px;border-radius:4px;border:1px solid #555;position:relative;margin-top:1px}
.tog.off::after{content:"";position:absolute;left:3px;top:1.200px;width:3px;height:3px;border-radius:50%;background:#333}
.tog.yes{background:#1f7a62;border-color:#1f7a62}
.tog.yes::after{content:"";position:absolute;right:2px;top:1px;width:3px;height:3px;background:#fff}
.viz-add{margin:3px 0 0 -1px;height:12px;background:#fbfbfb;border:1px dotted #ccc;line-height:11px;padding-left:3px;white-space:nowrap;color:#666}

.data{flex:1;background:#f3f2f1;border-left:1px solid #e2e2e2;padding:0 0 0 3px;font-size:5.200px;line-height:7px}
.data-search{height:13px;margin:3px 0 6px;background:#fff;border:1px solid #d0d0d0;border-right:0;display:flex;align-items:center;gap:3px;padding-left:2px;font-size:5.700px;color:#777}
.tree li{display:flex;align-items:center;gap:2px;height:11.600px;padding-left:2px;white-space:nowrap;color:#666}
.pbi-foot{height:16px;background:#f3f2f1;display:flex;align-items:flex-end;padding-left:27px;font-size:5.400px}
.foot-ic{width:11px;height:11px;margin:0 10px 3px 0}
.foot-ic.mon{border-bottom:1px solid #1d6f5b;height:12px;margin-bottom:2px}
.ft-arr{color:#bbb;margin:0 4px 4px 0;font-size:6px;line-height:8px;width:11px}
.ft-tab{width:60px;background:#fff;height:16px;line-height:15px;text-align:center;border-bottom:1px solid #1d6f5b;color:#444}
.ft-tab2{width:35px;height:16px;display:flex;align-items:center;justify-content:center;gap:2px;color:#555}
.ft-add{width:19px;height:16px;background:#217a66;color:#fff;font-weight:700;font-size:9px;line-height:15px;text-align:center}

/* outlook */
.ol{position:relative;width:917px;height:389px;margin-left:39px;background:#171717;overflow:hidden;filter:blur(.45px);color:#cfcfcf;font-size:6.200px;line-height:9px}
.ol-bg{display:flex;height:100%}
.ol-rail{width:9px;background:#0f0f0f}
.ol-left{width:61px;background:#1a1a1a;position:relative;white-space:nowrap}
.ol-ribbon{height:44px;background:#2a2a2a;display:flex;gap:11px;padding-left:8px;border-radius:0 0 3px 3px;font-size:5.600px;line-height:8px;text-align:center}
.olr-btn{display:flex;flex-direction:column;align-items:center;color:#ccc;width:22px}
.olr-btn span{margin-top:3px}
.olr-btn small{font-size:5px;color:#888;line-height:7px;margin-top:2px}
.ol-month{display:flex;gap:6px;align-items:center;padding-left:10px;margin-top:11px;font-size:6.400px}
.ol-days{display:grid;grid-template-columns:repeat(4,13.700px);grid-auto-rows:14.400px;margin-top:5px;padding-left:10px;font-size:5.300px;line-height:14.400px;text-align:center;color:#ddd}
.ol-days b{font-weight:700;color:#bbb}
.ol-days i{font-style:normal;color:#777}
.ol-days .wk{background:#113a56;color:#e6f1ff}
.ol-month b{font-weight:700;color:#ddd}
.ol-add{display:flex;gap:7px;align-items:center;padding-left:10px;margin-top:17px;color:#3e86b8}
.ol-my{display:flex;gap:7px;align-items:center;padding-left:10px;margin-top:16px}
.ol-my b{font-weight:600;color:#ddd}
.ol-c{display:flex;gap:7px;align-items:center;padding-left:10px;margin-top:10px;height:10px}
.dot{display:block;width:8px;height:8px;border-radius:50%;font-style:normal;font-size:5px;line-height:8px;text-align:center;color:#fff}
.dot.teal{background:#22a39a}.dot.blue{background:#1f7fe0}
.ol-all{padding-left:25px;margin-top:16px;color:#3e86b8}
.ol-main{flex:1;display:flex;flex-direction:column;min-width:0}
.ol-tools{height:14px;display:flex;align-items:center}
.t1{margin-left:15px}.t2{margin-left:16px}.t3{margin-left:10px}.t4{margin-left:8px}.t5{margin-left:18px}.t6{margin-left:28px}.t7{margin-left:18px}
.ol-week{position:relative;flex:1;margin-top:59px;background:#242424;background-image:linear-gradient(#3a3a3a 1px,transparent 1px);background-size:100% 31px;background-position:0 33px;border-top:1px solid #333}
.ol-week::after{content:"";position:absolute;left:763px;top:0;bottom:0;width:1px;background:#3d3d3d}
.ol-weekhead{position:absolute;left:771px;top:3px;display:flex;flex-direction:column;font-size:5.500px;color:#aaa;z-index:1}
.ol-weekhead b{font-weight:400;font-size:8px;line-height:14px;margin-top:1px}
.ol-evt{position:absolute;left:666px;width:91px;height:13px;display:flex;justify-content:space-between;align-items:center;padding:0 1px 0 2px;font-size:5.800px;white-space:nowrap;overflow:hidden;color:#cde}
.e1{top:112px;background:#0d5a58}
.e2{top:159px;background:#0d3a3a;height:12px}
.e3{top:192px;height:27px;background:#0d3f42;display:block;line-height:8.500px;padding-top:2px}
.e3 b,.e3 span{display:block}
.e4{top:219px;height:33px;background:#333;justify-content:flex-end;align-items:flex-end;padding:0 3px 4px 0}

.ev{position:absolute;left:69px;top:14px;width:667px;bottom:0;background:#1b1b1b;display:flex;flex-direction:column;box-shadow:-2px 0 4px #000}
.ev-title{height:25px;background:#232628;display:flex;align-items:center;padding-left:6px;font-size:6.900px;color:#d6d6d6;flex:none}
.ev-title span:first-child{flex:1}
.ev-ctl{width:25px;text-align:center;color:#aaa;font-size:7px}
.ev-tabs{height:18px;background:#171717;display:flex;gap:16px;padding-left:7px;font-size:7px;line-height:16px;color:#ccc;flex:none}
.ev-tabs .on{font-weight:700;color:#eee;border-bottom:1px solid #4aa5d8;height:14px;line-height:12px;margin-top:2px}
.ev-ribbon{position:relative;height:47px;margin:0 10px 0 3px;background:#2c2c2c;display:flex;border-radius:3px;color:#d6d6d6;font-size:5.700px;line-height:9px;text-align:center;flex:none}
.er-more{position:absolute;right:-8px;bottom:2px;color:#999}
.er-g{display:flex;flex-direction:column;align-items:center;border-right:1px solid #3a3a3a;padding-top:2px;position:relative}
.er-g small{font-size:5px;line-height:6px;color:#999;position:absolute;bottom:0;white-space:nowrap}
.er-i{display:flex}
.erb{display:flex;flex-direction:column;align-items:center;white-space:nowrap}
.erb svg{margin-bottom:3px}
.erb b{font-weight:700}
.er-line{display:flex;align-items:center;gap:1px;height:9px}
.er-line svg{margin:0}
.w-a{width:40px}.w-b{width:71px}.w-c{width:64px}.w-d{width:49px}.w-e{width:61px}.w-f{width:45px}.w-g{width:44px;border-right:0}
.busy{display:block;width:13px;height:9px;background:repeating-linear-gradient(60deg,#bbb 0 1px,#555 1px 3px);margin:3px 0 6px}
.tagb{color:#3f9cd8}.gold{color:#d69a3a}.orange2{color:#d6803a}.purple{color:#9a4ed0}.blue2{color:#3c78d0}
.w27{margin:0 3px}
.hl{background:#333}
.ev-body{flex:1;display:flex;gap:9px;margin:7px 0 0 3px;min-height:0}
.form{width:462px;height:262px;background:#2a2a2a;border-radius:3px;color:#8e8e8e;padding:6px 9px 0 7px;font-size:6.200px;line-height:9px;display:flex;flex-direction:column}
.f-top{display:flex;gap:13px;height:16px;flex:none}
.f-save{width:44px;background:#1c8d92;color:#0f3a3c;font-weight:700;border-radius:1px;display:flex;align-items:center;gap:5px;padding-left:6px;font-size:6px}
.f-cal{width:161px;border:1px solid #4a4a4a;display:flex;align-items:center;padding-left:8px;color:#9a9a9a;position:relative}
.f-cal i{width:2px;height:2px;background:#2bb0a0;margin-right:9px}
.f-chev{margin-left:auto;margin-right:4px}
.f-row{display:flex;align-items:center;border-bottom:1px solid #383838;margin-left:20px;position:relative;flex:none}
.f-row .f-ic{position:absolute;left:-19px}
.f-tit{height:30px;font-size:10px;font-weight:600;color:#8f8f8f;padding-top:8px}
.f-tit .box{width:16px;height:15px;border:1px solid #444;background:#333;font-size:4px;display:flex;align-items:center;justify-content:center;top:8px;color:#2a9;line-height:5px}
.f-ic-in{letter-spacing:.5px}
.f-inv{height:30px}
.f-inv .f-ic{font-size:7px;filter:grayscale(1)}
.f-inv em{font-style:normal;margin-left:auto;margin-right:3px;color:#1e7f74}
.f-dates{display:flex;margin-top:7px;height:36px;flex:none}
.clock{width:20px;padding-top:5px}
.f-dcol{display:flex;flex-direction:column;gap:4px}
.f-d{display:flex;gap:2px;height:16px;align-items:stretch;color:#9a9a9a}
.dbox{width:74px;border:1px solid #414141;display:flex;align-items:center;justify-content:space-between;padding:0 5px 0 3px;letter-spacing:.15px;color:#aaa}
.tbox{width:40px;border:1px solid #414141;padding:3px 0 0 3px}
.after{margin-left:50px;width:42px;border:1px solid #414141;text-align:right;padding:3px 2px 0 0;white-space:nowrap}
.after.sp{border:0;width:6px;margin-left:72px;padding-right:0}
.tz{color:#1e7f74;margin-left:14px;padding-top:3px;white-space:nowrap}
.tz i{font-style:normal;display:inline-block;width:8px}
.f-tog{display:flex;align-items:center;gap:6px;height:16px;margin-top:5px;flex:none}
.f-tog .f-ic{width:14px;font-size:9px;color:#999;text-align:center}
.tg-d{display:block;width:20px;height:9px;border-radius:5px;border:1px solid #666;background:#1d1d1d;position:relative}
.tg-d::after{content:"";position:absolute;left:2px;top:1px;width:5px;height:5px;border-radius:50%;background:#bbb}
.tg-d.sm{border-color:#222}
.f-loc{display:flex;justify-content:space-between;align-items:flex-end;margin:14px 8px 0 20px;height:20px;border-bottom:1px solid #383838;padding-bottom:4px;flex:none}
.teams{display:flex;align-items:center;gap:4px;color:#9a9a9a;margin-bottom:4px;font-size:6.600px}
.t-ic{display:block;width:8px;height:8px;border-radius:50%;background:#5a5ad0;color:#fff;font-style:normal;font-size:5px;line-height:8px;text-align:center}
.f-desc{display:flex;margin-top:6px;height:68px;flex:none}
.f-desc .doc{width:18px;padding-top:5px}
.desc-box{width:428px;height:68px;border:1px solid #3c3c3c;display:flex;flex-direction:column;justify-content:space-between;color:#7e7e7e}
.desc-txt{padding:3px 5px}
.desc-tools{height:25px;background:#121212;display:flex;align-items:center;padding-left:9px;margin-bottom:1px}
.dt1b{margin-left:1px;color:#777}
.dt2{margin-left:9px}
.smile{display:block;width:8px;height:8px;border-radius:50%;background:#e8b834;margin-left:15px}
.dt3{margin-left:10px}
.dt4{margin-left:28px}
.sched{width:182px;background:#292929;border-radius:3px 3px 0 0;display:flex;flex-direction:column;min-height:0;overflow:hidden}
.sc-head{height:26px;flex:none;display:flex;align-items:center;gap:4px;padding:0 7px 0 8px;font-size:7.300px;color:#bbb}
.sc-head b{font-weight:600;margin-left:5px}
.sc-exp{margin-left:auto;font-size:9px}
.sc-nav{font-size:9px;width:6px}
.sc-strip{height:16px;flex:none;margin:4px 10px 0 0;border-top:1px solid #3d3d3d;background:linear-gradient(#3d3d3d,#3d3d3d) 0 10px/100% 1px no-repeat}
.sc-grid{position:relative;flex:none;height:232px;margin-right:10px}
.sc-grid::before{content:"";position:absolute;left:25px;top:-6px;bottom:0;width:1px;background:#888}
.sc-hr{height:31px;border-top:1px solid #3d3d3d;padding:2px 0 0 8px;font-size:5.800px;color:#888}
.sc-ev{position:absolute;font-size:5.800px;line-height:8.300px;color:#c4c4c4;padding:3px 3px;background:#161616;overflow:hidden}
.sc-ev b{font-weight:600;color:#d2d2d2}
.rp{position:absolute;right:3px;bottom:3px;color:#aaa}
.rp2{position:absolute;right:3px;top:4px;color:#aaa}
.sc-ev.now{left:25px;top:0;width:147px;height:16px;background:#5cc870;color:#103a1a;font-weight:700;font-size:6.200px;line-height:9px;padding:3px 5px;overflow:visible}
.now i{position:absolute;width:4px;height:4px;background:#111;border-radius:50%}
.n1{right:12px;top:-1px}.n2{left:12px;bottom:-2px}
.sc-ev.a{left:29px;top:33px;width:137px;height:28px}
.sc-ev.b{left:29px;top:62px;width:137px;height:31px;background:#2c2c2c}
.sc-ev.c{left:29px;top:108px;width:68px;height:30px;background:#222}
.sc-ev.d{left:99px;top:125px;width:67px;height:47px}
.sc-ev.e{left:29px;top:156px;width:66px;height:15px;background:#222;white-space:nowrap}
.sc-ev.f{left:29px;top:186px;width:137px;height:15px;white-space:nowrap}

.cat-menu{position:absolute;left:118px;top:85px;width:99px;height:159px;background:#242424;box-shadow:0 2px 6px #000;color:#cfcfcf;font-size:6.200px;line-height:9px;z-index:3}
.cat-menu li{display:flex;align-items:center;gap:5px;height:16.700px;padding-left:15px;white-space:nowrap}
.cat-menu li.hov{background:#161616}
.c-am{color:#d6a020}.c-az{color:#2a9ac0}.c-la{color:#c9702a}.c-ro{color:#7a4fd0}.c-ve{color:#2f9e3f}.c-vm{color:#d04040}.c-pr{color:#a03a3a}
.cm-link{border-top:1px solid #333;height:20px;line-height:21px;padding-left:20px;white-space:nowrap}
.ol-cursor{position:absolute;left:32px;top:14px;width:7px;height:10px}
```
